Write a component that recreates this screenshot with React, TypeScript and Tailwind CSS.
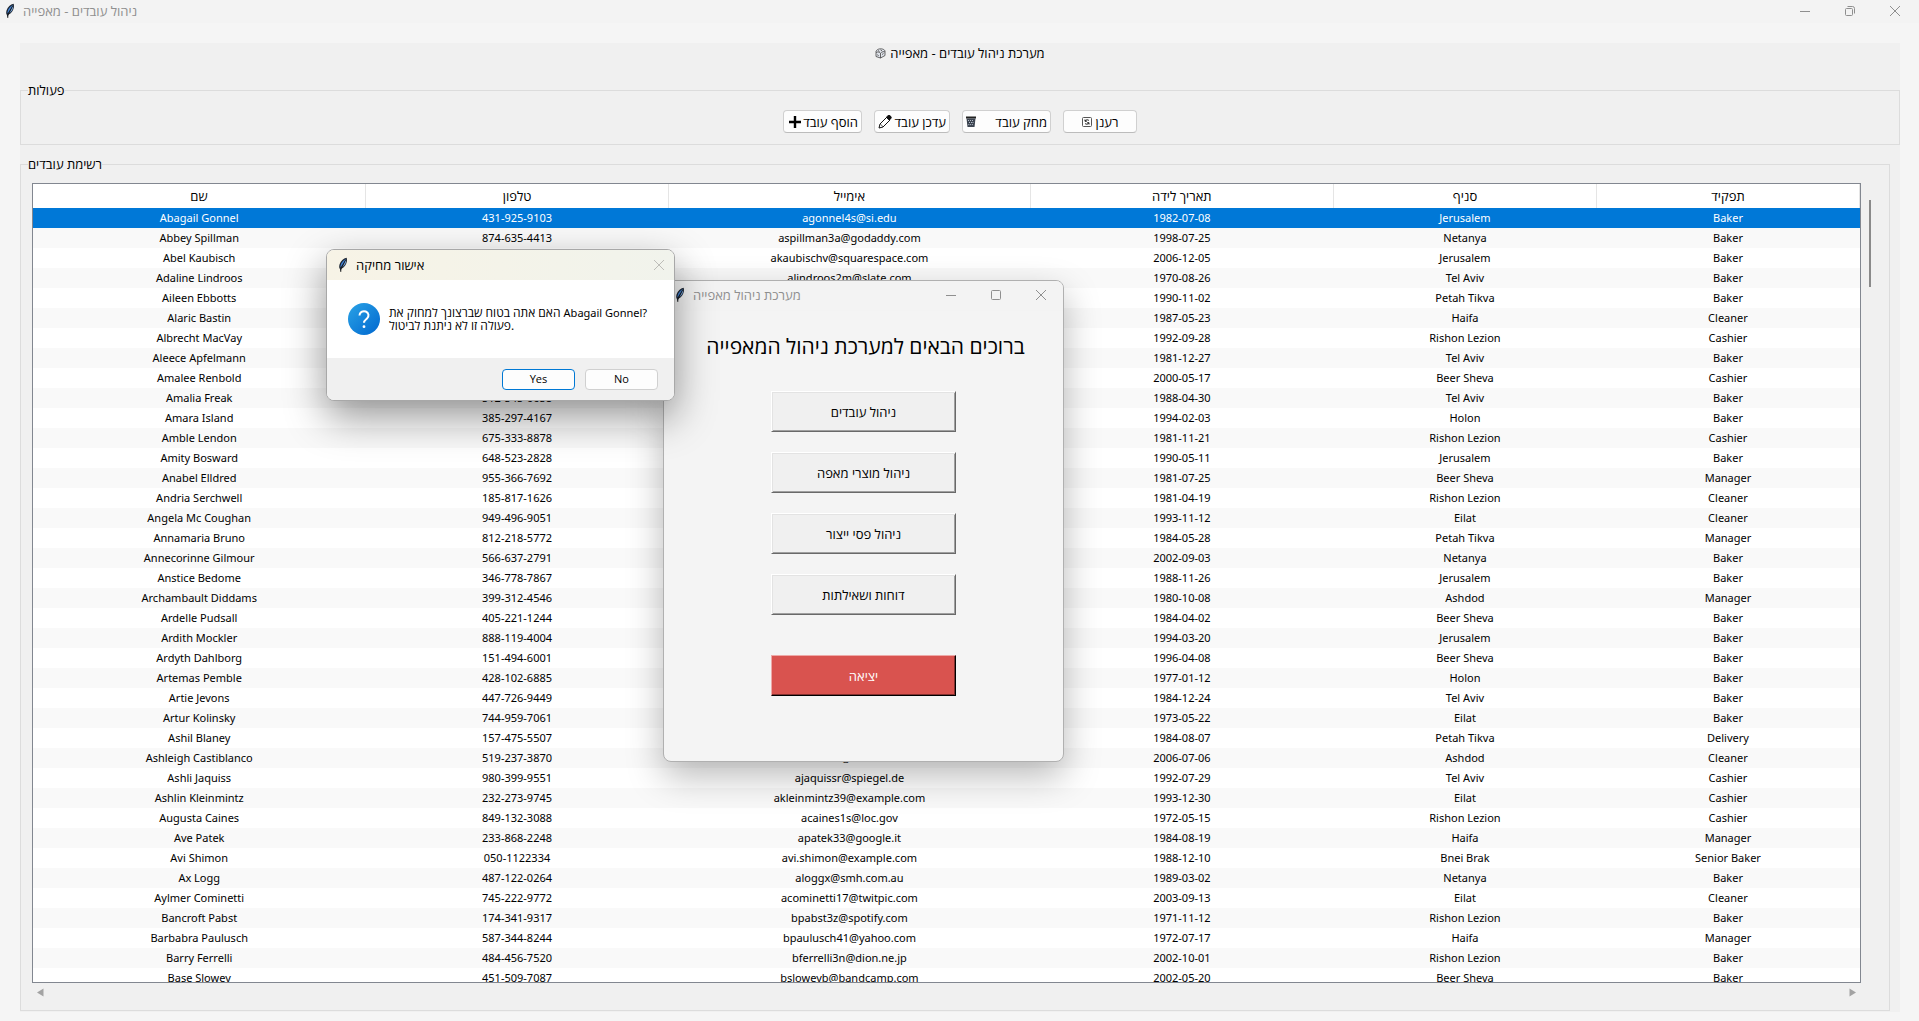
import React from "react";

type Employee = [name: string, phone: string, email: string, birth: string, branch: string, role: string];

const columns = [
  { title: "שם", width: "w-[18.2%]" },
  { title: "טלפון", width: "w-[16.6%]" },
  { title: "אימייל", width: "w-[19.8%]" },
  { title: "תאריך לידה", width: "w-[16.6%]" },
  { title: "סניף", width: "w-[14.4%]" },
  { title: "תפקיד", width: "w-[14.4%]" },
];

const employees: Employee[] = [
  ["Abagail Gonnel", "431-925-9103", "agonnel4s@si.edu", "1982-07-08", "Jerusalem", "Baker"],
  ["Abbey Spillman", "874-635-4413", "aspillman3a@godaddy.com", "1998-07-25", "Netanya", "Baker"],
  ["Abel Kaubisch", "", "akaubischv@squarespace.com", "2006-12-05", "Jerusalem", "Baker"],
  ["Adaline Lindroos", "", "alindroos2m@slate.com", "1970-08-26", "Tel Aviv", "Baker"],
  ["Aileen Ebbotts", "", "", "1990-11-02", "Petah Tikva", "Baker"],
  ["Alaric Bastin", "", "", "1987-05-23", "Haifa", "Cleaner"],
  ["Albrecht MacVay", "", "", "1992-09-28", "Rishon Lezion", "Cashier"],
  ["Aleece Apfelmann", "", "", "1981-12-27", "Tel Aviv", "Baker"],
  ["Amalee Renbold", "", "", "2000-05-17", "Beer Sheva", "Cashier"],
  ["Amalia Freak", "512-545-6658", "", "1988-04-30", "Tel Aviv", "Baker"],
  ["Amara Island", "385-297-4167", "", "1994-02-03", "Holon", "Baker"],
  ["Amble Lendon", "675-333-8878", "", "1981-11-21", "Rishon Lezion", "Cashier"],
  ["Amity Bosward", "648-523-2828", "", "1990-05-11", "Jerusalem", "Baker"],
  ["Anabel Elldred", "955-366-7692", "", "1981-07-25", "Beer Sheva", "Manager"],
  ["Andria Serchwell", "185-817-1626", "", "1981-04-19", "Rishon Lezion", "Cleaner"],
  ["Angela Mc Coughan", "949-496-9051", "", "1993-11-12", "Eilat", "Cleaner"],
  ["Annamaria Bruno", "812-218-5772", "", "1984-05-28", "Petah Tikva", "Manager"],
  ["Annecorinne Gilmour", "566-637-2791", "", "2002-09-03", "Netanya", "Baker"],
  ["Anstice Bedome", "346-778-7867", "", "1988-11-26", "Jerusalem", "Baker"],
  ["Archambault Diddams", "399-312-4546", "", "1980-10-08", "Ashdod", "Manager"],
  ["Ardelle Pudsall", "405-221-1244", "", "1984-04-02", "Beer Sheva", "Baker"],
  ["Ardith Mockler", "888-119-4004", "", "1994-03-20", "Jerusalem", "Baker"],
  ["Ardyth Dahlborg", "151-494-6001", "", "1996-04-08", "Beer Sheva", "Baker"],
  ["Artemas Pemble", "428-102-6885", "", "1977-01-12", "Holon", "Baker"],
  ["Artie Jevons", "447-726-9449", "", "1984-12-24", "Tel Aviv", "Baker"],
  ["Artur Kolinsky", "744-959-7061", "", "1973-05-22", "Eilat", "Baker"],
  ["Ashil Blaney", "157-475-5507", "", "1984-08-07", "Petah Tikva", "Delivery"],
  ["Ashleigh Castiblanco", "519-237-3870", "acastiblanco42@themeforest.net", "2006-07-06", "Ashdod", "Cleaner"],
  ["Ashli Jaquiss", "980-399-9551", "ajaquissr@spiegel.de", "1992-07-29", "Tel Aviv", "Cashier"],
  ["Ashlin Kleinmintz", "232-273-9745", "akleinmintz39@example.com", "1993-12-30", "Eilat", "Cashier"],
  ["Augusta Caines", "849-132-3088", "acaines1s@loc.gov", "1972-05-15", "Rishon Lezion", "Cashier"],
  ["Ave Patek", "233-868-2248", "apatek33@google.it", "1984-08-19", "Haifa", "Manager"],
  ["Avi Shimon", "050-1122334", "avi.shimon@example.com", "1988-12-10", "Bnei Brak", "Senior Baker"],
  ["Ax Logg", "487-122-0264", "aloggx@smh.com.au", "1989-03-02", "Netanya", "Baker"],
  ["Aylmer Cominetti", "745-222-9772", "acominetti17@twitpic.com", "2003-09-13", "Eilat", "Cleaner"],
  ["Bancroft Pabst", "174-341-9317", "bpabst3z@spotify.com", "1971-11-12", "Rishon Lezion", "Baker"],
  ["Barbabra Paulusch", "587-344-8244", "bpaulusch41@yahoo.com", "1972-07-17", "Haifa", "Manager"],
  ["Barry Ferrelli", "484-456-7520", "bferrelli3n@dion.ne.jp", "2002-10-01", "Rishon Lezion", "Baker"],
  ["Base Slowey", "451-509-7087", "bsloweyb@bandcamp.com", "2002-05-20", "Beer Sheva", "Baker"],
];

function Feather() {
  return (
    <svg width="10" height="16" viewBox="0 0 10 16" className="shrink-0" aria-hidden="true">
      <path d="M8.600.7C5.500 1.300 2.600 4 1.600 7.200c-.6 2-.5 3.600.2 4.600L2.800 15l.6-3.200C6.400 10.600 8.300 7.500 8.800 4.800 9.100 3.200 9 1.600 8.600.7z" fill="#1c2430" />
      <path d="M8 2C5.500 3 3.300 5.400 2.600 8.500c-.2.8-.2 1.500 0 2L5.500 6z" fill="#3f7fd0" />
      <path d="M8.100 2.800 4 10.400C6 9.200 7.500 7 8 4.800z" fill="#7fb0ea" />
      <path d="M7.500 3 2.800 12.500V15" stroke="#111" strokeWidth=".7" fill="none" />
    </svg>
  );
}

function MinimizeIcon() {
  return (
    <svg width="10" height="10" viewBox="0 0 10 10" stroke="#8f8f8f" fill="none" aria-hidden="true">
      <path d="M0 5.500h10" />
    </svg>
  );
}

function MaximizeIcon() {
  return (
    <svg width="10" height="10" viewBox="0 0 10 10" stroke="#8f8f8f" fill="none" aria-hidden="true">
      <rect x=".5" y=".5" width="9" height="9" rx="1" />
    </svg>
  );
}

function RestoreIcon() {
  return (
    <svg width="10" height="10" viewBox="0 0 10 10" stroke="#8f8f8f" fill="none" aria-hidden="true">
      <rect x=".5" y="2.500" width="7" height="7" rx="1" />
      <path d="M2.500.5H7.500a2 2 0 0 1 2 2V7.500" />
    </svg>
  );
}

function CloseIcon({ color = "#8f8f8f" }: { color?: string }) {
  return (
    <svg width="10" height="10" viewBox="0 0 10 10" stroke={color} fill="none" aria-hidden="true">
      <path d="M0 0l10 10M10 0L0 10" />
    </svg>
  );
}

function BreadIcon() {
  return (
    <svg width="11" height="11" viewBox="0 0 11 11" fill="none" stroke="#444" strokeWidth=".8" aria-hidden="true">
      <path d="M1 4.500C.5 2.500 3 .8 5.500.8S10.500 2 10 4v3.500L5.500 10 1 8.500z" fill="#dfe3ea" />
      <path d="M1 4.500c1.500-1 3.500-.5 4.500.8V10M5.500 5.300C7 3.500 9 3.300 10 4M3 2.500l1.500 1M5.500 1.800l1.500 1M2.500 6.500l1 1.500M7 6.500l1.500-1" />
    </svg>
  );
}

function PlusIcon() {
  return (
    <svg width="12" height="12" viewBox="0 0 12 12" stroke="#000" strokeWidth="2.400" aria-hidden="true">
      <path d="M6 0v12M0 6h12" />
    </svg>
  );
}

function PencilIcon() {
  return (
    <svg width="14" height="14" viewBox="0 0 14 14" fill="none" stroke="#111" aria-hidden="true">
      <path d="M1 13l1-4L9 2l3 3L5 12z" fill="#fff" />
      <path d="M8.300 2.300l1.300-1.200a2 2 0 0 1 2.900 0 2 2 0 0 1 0 2.900L11.300 5.200z" fill="#111" />
      <path d="M2.300 9l2.700 2.700" strokeWidth=".7" />
    </svg>
  );
}

function TrashIcon() {
  return (
    <svg width="10" height="11" viewBox="0 0 10 11" aria-hidden="true">
      <path d="M0 .5h10v2H0z" fill="#222" />
      <path d="M.5 2.500h9L8.500 11h-7z" fill="#3c4450" />
      <path d="M2.500 4v.9M4.500 4v.9M6.500 4v.9M3.500 6v.9M5.500 6v.9M7 6v.9M2.800 8.200v.9M4.600 8.200v.9M6.400 8.200v.9" stroke="#c3ccd8" />
    </svg>
  );
}

function RefreshIcon() {
  return (
    <svg width="10" height="10" viewBox="0 0 10 10" fill="none" stroke="#222" aria-hidden="true">
      <rect x=".5" y=".5" width="9" height="9" rx="1" stroke="#555" />
      <path d="M7 3.700C6.300 2.500 4 2.400 3.200 4M3 6.300C3.700 7.500 6 7.600 6.800 6M3 2.500V4.300h1.800M7 7.500V5.700H5.200" />
    </svg>
  );
}

function ToolButton({ label, icon, className }: { label: string; icon: React.ReactNode; className: string }) {
  return (
    <button
      dir="rtl"
      className={`flex h-[23px] items-center rounded border border-[#d0d0d0] border-b-[#bcbcbc] bg-[#fdfdfd] px-[3px] whitespace-nowrap ${className}`}
    >
      <span>{label}</span>
      {icon}
    </button>
  );
}

function MenuButton({ label }: { label: string }) {
  return (
    <button className="h-[41px] w-[185px] border border-t-white border-l-white border-r-[#696969] border-b-[#696969] bg-[#f0f0f0] text-center shadow-[inset_1px_1px_0_#e3e3e3,inset_-1px_-1px_0_#a0a0a0]">
      {label}
    </button>
  );
}

function MainMenuWindow() {
  return (
    <section
      aria-label="מערכת ניהול מאפייה"
      className="absolute top-[280px] left-[663px] flex h-[482px] w-[401px] flex-col overflow-hidden rounded-lg border border-[#b0b0b0] bg-[#f4f4f4] shadow-[0_14px_36px_rgba(0,0,0,0.28)]"
    >
      <header className="flex h-[30px] items-center bg-[#f3f3f3] pr-[17px] pb-[2px] pl-[11px] text-[#8f8f8f]">
        <Feather />
        <span dir="rtl" className="ml-[8px]">מערכת ניהול מאפייה</span>
        <div className="ml-auto flex items-center gap-[35px]">
          <button aria-label="Minimize"><MinimizeIcon /></button>
          <button aria-label="Maximize"><MaximizeIcon /></button>
          <button aria-label="Close"><CloseIcon /></button>
        </div>
      </header>
      <h2 dir="rtl" className="mt-[20px] pl-1 text-center text-[21px] leading-[30px] whitespace-nowrap">
        ברוכים הבאים למערכת ניהול המאפייה
      </h2>
      <div className="mt-[30px] flex flex-col items-center gap-5">
        <MenuButton label="ניהול עובדים" />
        <MenuButton label="ניהול מוצרי מאפה" />
        <MenuButton label="ניהול פסי ייצור" />
        <MenuButton label="דוחות ושאילתות" />
        <button className="mt-5 h-[41px] w-[185px] border border-t-[#eda9a7] border-l-[#eda9a7] border-r-black border-b-black bg-[#d9534f] text-center text-white shadow-[inset_-1px_-1px_0_#82312f]">
          יציאה
        </button>
      </div>
    </section>
  );
}

function ConfirmDialog() {
  return (
    <section
      role="dialog"
      aria-label="אישור מחיקה"
      className="absolute top-[249px] left-[326px] flex w-[349px] flex-col overflow-hidden rounded-lg border border-[#a8a8a8] bg-white shadow-[0_16px_40px_rgba(0,0,0,0.42)]"
    >
      <header className="flex h-[30px] items-center bg-linear-to-r from-[#f7f3e6] to-[#f1f3ec] pr-[10px] pl-[11px]">
        <Feather />
        <span dir="rtl" className="ml-[8px]">אישור מחיקה</span>
        <button aria-label="Close" className="ml-auto"><CloseIcon color="#bdbdb8" /></button>
      </header>
      <div className="flex h-[78px] items-center pl-[21px]">
        <svg width="32" height="32" viewBox="0 0 32 32" className="shrink-0" aria-hidden="true">
          <defs>
            <linearGradient id="askFill" x1="0" y1="0" x2="1" y2="1">
              <stop offset="0" stopColor="#2aa3e6" />
              <stop offset="1" stopColor="#0067cf" />
            </linearGradient>
          </defs>
          <circle cx="16" cy="16" r="16" fill="url(#askFill)" />
          <path d="M11.500 12.500a4.500 4.200 0 1 1 7.500 3c-1.600 1.300-3 2.100-3 4.300" fill="none" stroke="#fff" strokeWidth="2" />
          <circle cx="16" cy="23.700" r="1.400" fill="#fff" />
        </svg>
        <p className="ml-[9px] text-[12px] leading-[13px] whitespace-nowrap">
          האם אתה בטוח שברצונך למחוק את <span className="font-['Noto_Sans',sans-serif] text-[11px]">Abagail Gonnel?</span>
          <br />
          פעולה זו לא ניתנת לביטול.
        </p>
      </div>
      <footer className="flex h-[42px] items-center justify-end gap-[10px] bg-[#f0f0f0] pr-4 text-[11px]">
        <button className="h-[21px] w-[73px] rounded border border-[#0078d4] bg-[#fdfdfd]">Yes</button>
        <button className="h-[21px] w-[73px] rounded border border-[#d0d0d0] bg-[#fdfdfd]">No</button>
      </footer>
    </section>
  );
}

export default function App() {
  return (
    <div className="relative flex h-screen min-h-[600px] flex-col overflow-hidden bg-[#f5f5f5] font-['Open_Sans','Noto_Sans','DejaVu_Sans',sans-serif] text-[13px] leading-4 text-black">
      <header className="flex h-[23px] shrink-0 items-center bg-[#f3f3f3] pr-[19px] pb-[2px] pl-[5px] text-[#8f8f8f]">
        <Feather />
        <span dir="rtl" className="ml-[8px]">ניהול עובדים - מאפייה</span>
        <div className="ml-auto flex items-center gap-[35px]">
          <button aria-label="Minimize"><MinimizeIcon /></button>
          <button aria-label="Restore"><RestoreIcon /></button>
          <button aria-label="Close"><CloseIcon /></button>
        </div>
      </header>

      <main className="mt-5 mr-[19px] mb-[9px] ml-5 flex min-h-0 flex-1 flex-col bg-[#f0f0f0]">
        <h1 dir="rtl" className="flex items-center justify-center gap-1 pt-[2px]">
          מערכת ניהול עובדים - מאפייה
          <BreadIcon />
        </h1>

        <fieldset className="mt-[21px] h-[63px] shrink-0 border border-[#dcdcdc]">
          <legend dir="rtl" className="ml-[7px]">פעולות</legend>
          <div className="flex justify-center gap-3 pt-[12px]">
            <ToolButton label="הוסף עובד" icon={<PlusIcon />} className="w-[79px] justify-between pl-[5px]" />
            <ToolButton label="עדכן עובד" icon={<PencilIcon />} className="w-[76px] justify-between" />
            <ToolButton label="מחק עובד" icon={<TrashIcon />} className="w-[89px] justify-between" />
            <ToolButton label="רענן" icon={<RefreshIcon />} className="w-[74px] justify-center gap-1" />
          </div>
        </fieldset>

        <fieldset className="mt-[11px] mr-[10px] mb-px flex min-h-0 min-w-0 flex-1 flex-col border border-[#dcdcdc]">
          <legend dir="rtl" className="ml-[7px]">רשימת עובדים</legend>
          <div className="mt-[11px] mr-[10px] ml-[11px] flex min-h-0 flex-1">
            <div className="min-w-0 flex-1 overflow-hidden border border-[#828790] bg-white">
              <table className="w-full table-fixed border-collapse text-center">
                <thead>
                  <tr className="h-6">
                    {columns.map((c) => (
                      <th key={c.title} dir="rtl" className={`border-r border-[#e5e5e5] p-0 text-center font-normal ${c.width}`}>
                        {c.title}
                      </th>
                    ))}
                  </tr>
                </thead>
                <tbody className="font-['Noto_Sans',sans-serif] text-[11px]">
                  {employees.map((row, i) => (
                    <tr
                      key={row[0]}
                      className={i === 0 ? "h-5 bg-[#0078d7] text-white" : i % 2 ? "h-5 bg-[#f9f9f9]" : "h-5 bg-white"}
                    >
                      {row.map((cell, j) => (
                        <td key={j} className="p-0 whitespace-nowrap">{cell}</td>
                      ))}
                    </tr>
                  ))}
                </tbody>
              </table>
            </div>
            <div className="flex w-[18px] justify-center pt-[17px]">
              <div className="h-[87px] w-[2px] bg-[#8a8a8a]" />
            </div>
          </div>
          <div className="flex h-[27px] shrink-0 items-start justify-between pt-[5px] pr-[33px] pl-[16px]">
            <svg width="7" height="9" viewBox="0 0 7 9" fill="#a3a3a3" aria-hidden="true"><path d="M6.500.5v8L0 4.500z" /></svg>
            <svg width="7" height="9" viewBox="0 0 7 9" fill="#a3a3a3" aria-hidden="true"><path d="M.5.5v8L7 4.500z" /></svg>
          </div>
        </fieldset>
      </main>

      <MainMenuWindow />
      <ConfirmDialog />
    </div>
  );
}
